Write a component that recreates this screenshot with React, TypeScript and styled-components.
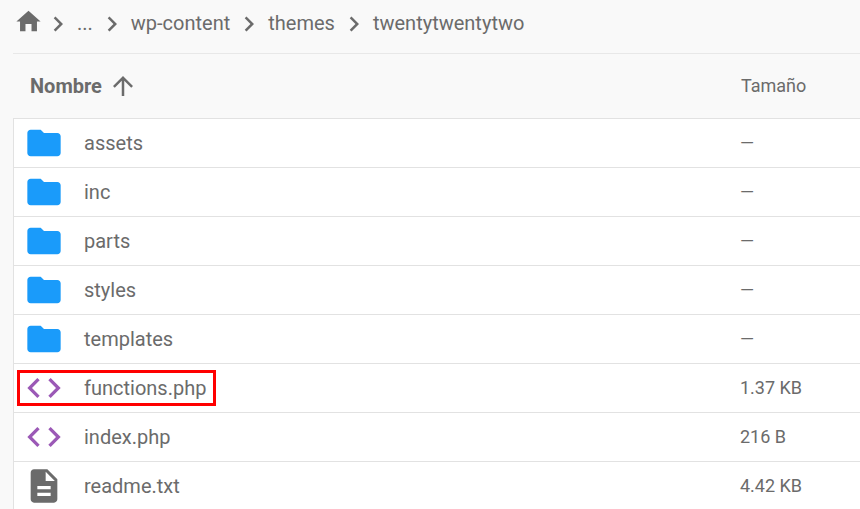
import styled, { createGlobalStyle } from 'styled-components'

const GlobalStyle = createGlobalStyle`
  html, body {
    margin: 0;
    height: 100%;
    overflow: hidden;
    background-color: #f9f9f9;
    font-family: Roboto, "Liberation Sans", sans-serif;
  }
`

const Page = styled.div`
  width: 860px;
  height: 509px;
  overflow: hidden;
  padding-left: 13px;
  box-sizing: border-box;
  color: #6b6b6b;
`

const Breadcrumb = styled.nav`
  height: 54px;
  display: flex;
  align-items: center;
  padding: 0 0 7px 1px;
  box-sizing: border-box;
  border-bottom: 1px solid #e8e8e8;
  font-size: 20px;
`

const Crumb = styled.span`
  line-height: 30px;
`

const Separator = styled.svg`
  width: 30px;
  height: 30px;
  margin: 2px 4px 0;
  fill: #6b6b6b;
  flex: none;
`

const HomeIcon = styled.svg`
  width: 29px;
  height: 29px;
  margin: 0 -4px 4px 0;
  fill: #6b6b6b;
  flex: none;
`

const HeaderRow = styled.div`
  height: 64px;
  display: flex;
  align-items: center;
  font-size: 18px;
`

const NameHead = styled.div`
  width: 728px;
  padding-left: 17px;
  box-sizing: border-box;
  display: flex;
  align-items: center;
  font-weight: 700;
  font-size: 20px;
`

const SortIcon = styled.svg`
  width: 30px;
  height: 30px;
  margin-left: 6px;
  fill: #6b6b6b;
`

const FileTable = styled.div`
  background-color: #ffffff;
  border-left: 1px solid #e2e2e2;
  border-top: 1px solid #e2e2e2;
`

const Row = styled.div`
  position: relative;
  height: 48px;
  display: flex;
  align-items: center;
  border-bottom: 1px solid #e2e2e2;
`

const IconCell = styled.svg<{ $color: string }>`
  width: 40px;
  height: 40px;
  margin-left: 10px;
  flex: none;
  fill: ${p => p.$color};
`

const Name = styled.div`
  width: 656px;
  margin-left: 20px;
  font-size: 20px;
`

const Size = styled.div`
  font-size: 18px;
  padding-bottom: 2px;
`

const Highlight = styled.div`
  position: absolute;
  left: 3px;
  top: 6px;
  width: 199px;
  height: 36px;
  box-sizing: border-box;
  border: 3px solid #ff0000;
`

const folderPath =
  'M10 4H4c-1.1 0-1.99.9-1.99 2L2 18c0 1.1.9 2 2 2h16c1.1 0 2-.9 2-2V8c0-1.1-.9-2-2-2h-8l-2-2z'
const codePath =
  'M14.6 16.6L19.2 12l-4.6-4.6L16 6l6 6-6 6-1.4-1.4zM9.4 16.6L4.8 12l4.6-4.6L8 6l-6 6 6 6 1.4-1.4z'
const docPath =
  'M14 2H6c-1.1 0-1.99.9-1.99 2L4 20c0 1.1.89 2 1.99 2H18c1.1 0 2-.9 2-2V8l-6-6zm2 16H8v-2h8v2zm0-4H8v-2h8v2zm-3-5V3.5L18.5 9H13z'

const kinds = {
  folder: { path: folderPath, color: '#1a9bfa' },
  code: { path: codePath, color: '#9b59b6' },
  doc: { path: docPath, color: '#6b6b6b' },
}

const files: { name: string; size: string; kind: keyof typeof kinds; marked?: boolean }[] = [
  { name: 'assets', size: '—', kind: 'folder' },
  { name: 'inc', size: '—', kind: 'folder' },
  { name: 'parts', size: '—', kind: 'folder' },
  { name: 'styles', size: '—', kind: 'folder' },
  { name: 'templates', size: '—', kind: 'folder' },
  { name: 'functions.php', size: '1.37 KB', kind: 'code', marked: true },
  { name: 'index.php', size: '216 B', kind: 'code' },
  { name: 'readme.txt', size: '4.42 KB', kind: 'doc' },
]

const Chevron = () => (
  <Separator viewBox="0 0 24 24">
    <path d="M8.59 16.59L13.17 12 8.59 7.41 10 6l6 6-6 6z" />
  </Separator>
)

const App = () => {
  return (
    <Page>
      <GlobalStyle />
      <Breadcrumb>
        <HomeIcon viewBox="0 0 24 24">
          <path d="M9.5 20v-6h5v6H19v-8h3L12 3 2 12h3v8z" />
        </HomeIcon>
        <Chevron />
        <Crumb>...</Crumb>
        <Chevron />
        <Crumb>wp-content</Crumb>
        <Chevron />
        <Crumb>themes</Crumb>
        <Chevron />
        <Crumb>twentytwentytwo</Crumb>
      </Breadcrumb>
      <HeaderRow>
        <NameHead>
          Nombre
          <SortIcon viewBox="0 0 24 24">
            <path d="M4 12l1.41 1.41L11 7.83V20h2V7.83l5.58 5.59L20 12l-8-8-8 8z" />
          </SortIcon>
        </NameHead>
        <Size>Tamaño</Size>
      </HeaderRow>
      <FileTable>
        {files.map(file => (
          <Row key={file.name}>
            <IconCell viewBox="0 0 24 24" $color={kinds[file.kind].color}>
              <path d={kinds[file.kind].path} />
            </IconCell>
            <Name>{file.name}</Name>
            <Size>{file.size}</Size>
            {file.marked && <Highlight />}
          </Row>
        ))}
      </FileTable>
    </Page>
  )
}

export default App
